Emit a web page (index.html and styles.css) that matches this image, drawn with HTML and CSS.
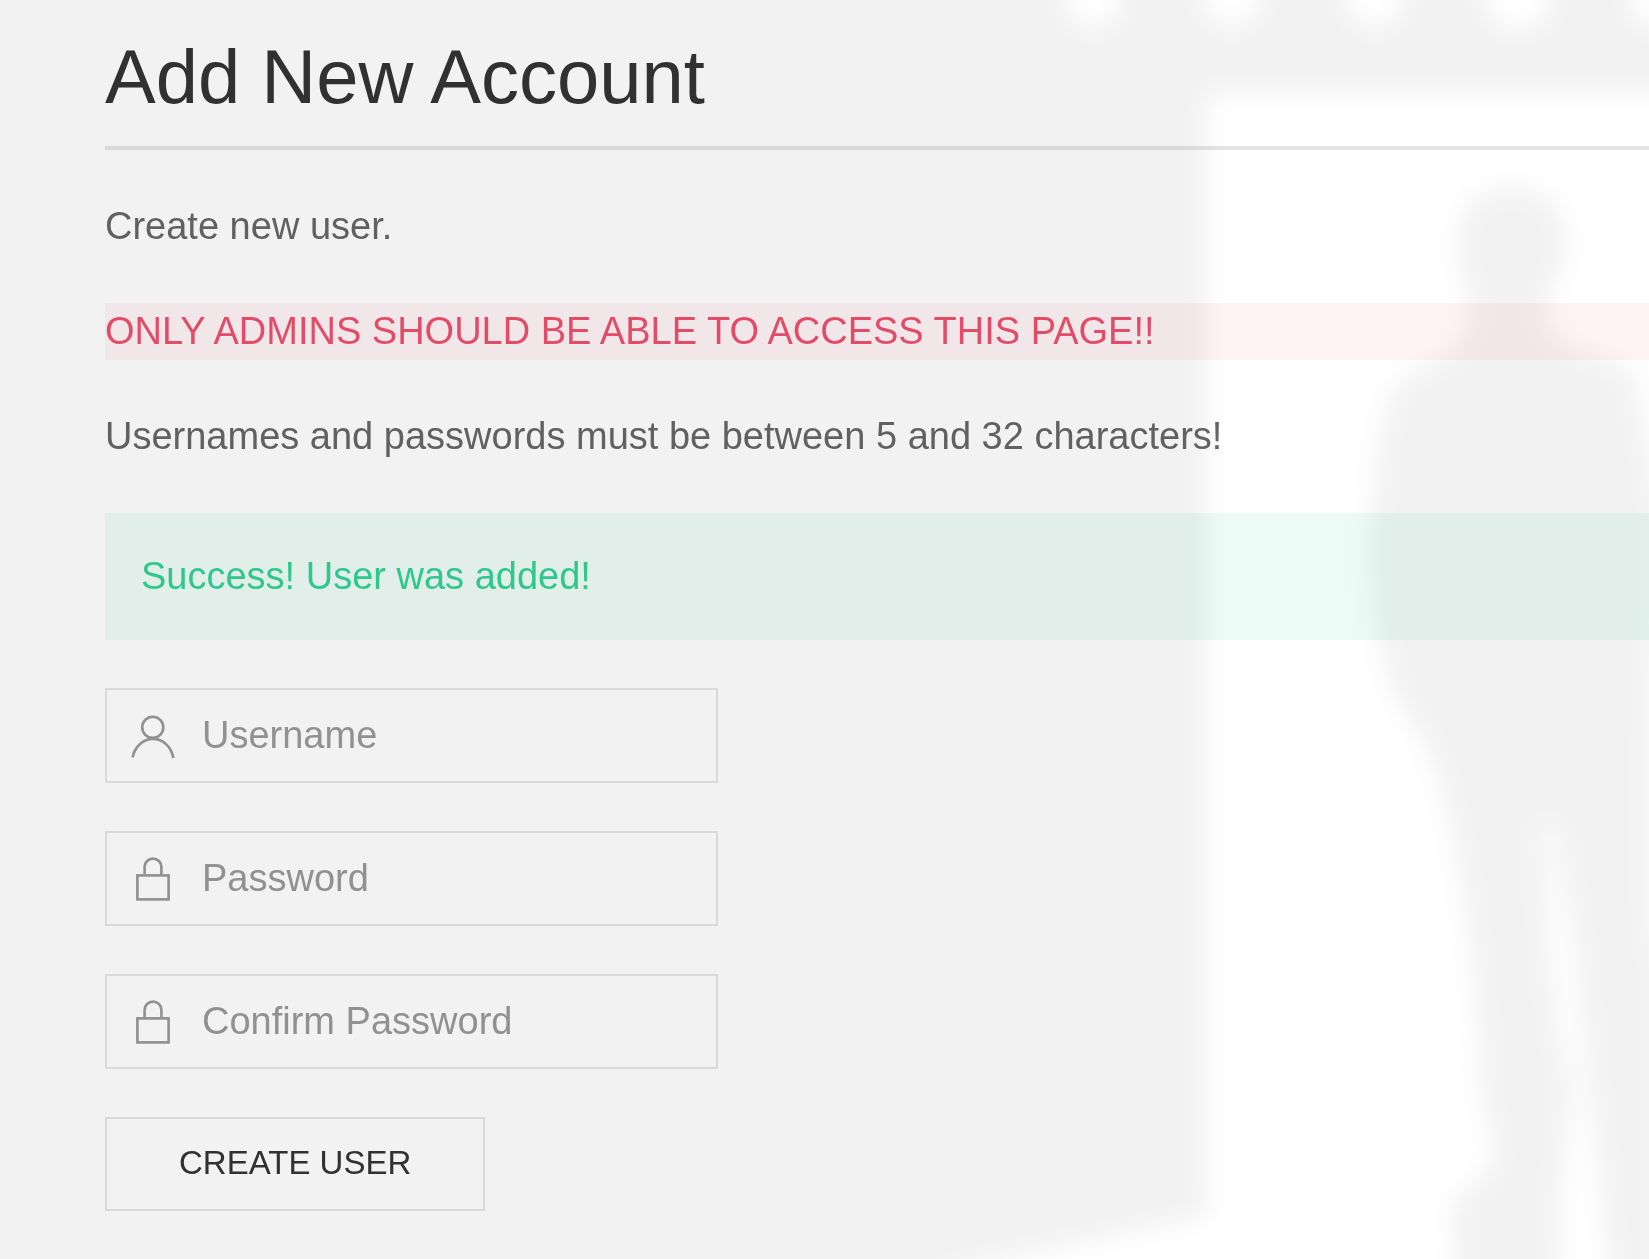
FILE: index.html
```html
<!DOCTYPE html>
<html lang="en">
<head>
  <meta charset="utf-8">
  <meta name="viewport" content="width=device-width, initial-scale=1">
  <title>Add New Account</title>
  <link rel="stylesheet" href="styles.css">
</head>
<body>
  <svg class="backdrop" viewBox="0 0 1649 1259" preserveAspectRatio="xMaxYMin slice" aria-hidden="true">
    <defs>
      <filter id="soft" x="-10%" y="-10%" width="120%" height="120%" color-interpolation-filters="sRGB">
        <feGaussianBlur stdDeviation="13"/>
      </filter>
    </defs>
    <g filter="url(#soft)">
      <g fill="#fff">
        <ellipse cx="1093" cy="-4" rx="28" ry="32"/>
        <ellipse cx="1232" cy="-4" rx="29" ry="32"/>
        <ellipse cx="1375" cy="-4" rx="29" ry="32"/>
        <ellipse cx="1518" cy="-4" rx="34" ry="34"/>
        <ellipse cx="1662" cy="-4" rx="32" ry="34"/>
        <path d="M1207 92H1720V1320H880L950 1270L1207 1217Z"/>
      </g>
      <path fill="#f2f2f2" d="M1512 187C1547 187 1566 208 1566 243C1566 275 1547 283 1547 312C1547 340 1572 350 1600 356C1628 362 1638 376 1641 412C1648 450 1662 490 1662 560C1662 620 1652 680 1652 740L1652 900L1664 1000V1320H1456L1453 1215C1453 1190 1472 1188 1488 1170C1502 1154 1482 1120 1479 1060C1478 990 1465 880 1444 800C1438 770 1424 736 1404 712C1386 680 1371 620 1371 560C1371 500 1378 430 1390 400C1400 370 1430 368 1448 354C1464 342 1472 322 1468 296C1464 280 1458 270 1458 243C1458 208 1477 187 1512 187Z"/>
      <path fill="#fff" d="M1544 826L1554 826L1574 940L1586 1060L1598 1160L1614 1320H1556L1562 1180L1572 1090L1558 1030L1548 930Z"/>
    </g>
  </svg>

  <main class="page">
    <h1 class="title">Add New Account</h1>
    <p>Create new user.</p>
    <p class="warning">ONLY ADMINS SHOULD BE ABLE TO ACCESS THIS PAGE!!</p>
    <p>Usernames and passwords must be between 5 and 32 characters!</p>
    <div class="alert" role="status">Success! User was added!</div>
    <form class="form">
      <label class="field" for="username">
        <svg class="icon" viewBox="0 0 20 20" aria-hidden="true">
          <circle cx="9.9" cy="6.4" r="4.4"/>
          <path d="M1.5 19C2.3 14.5 5.8 11.2 10 11.2C14.2 11.2 17.7 14.6 18.5 19.2"/>
        </svg>
        <input id="username" type="text" placeholder="Username" aria-label="Username">
      </label>
      <label class="field" for="password">
        <svg class="icon" viewBox="0 0 20 20" aria-hidden="true">
          <rect x="3.5" y="8.5" width="13" height="10"/>
          <path d="M6.5 8V4.88C6.5 3.01 8.07 1.5 10 1.5S13.5 3.01 13.5 4.88V8"/>
        </svg>
        <input id="password" type="password" placeholder="Password" aria-label="Password">
      </label>
      <label class="field" for="confirm">
        <svg class="icon" viewBox="0 0 20 20" aria-hidden="true">
          <rect x="3.5" y="8.5" width="13" height="10"/>
          <path d="M6.5 8V4.88C6.5 3.01 8.07 1.5 10 1.5S13.5 3.01 13.5 4.88V8"/>
        </svg>
        <input id="confirm" type="password" placeholder="Confirm Password" aria-label="Confirm Password">
      </label>
      <button class="button" type="submit">CREATE USER</button>
    </form>
  </main>
</body>
</html>
```

FILE: styles.css
```css
* {
  box-sizing: border-box;
}

body {
  margin: 0;
  background: #f2f2f2;
  color: #666;
  font: 38px/57px "Liberation Sans", Arial, sans-serif;
}

/* Decorative scene behind the content */
.backdrop {
  position: fixed;
  inset: 0;
  width: 100%;
  height: 100%;
}

/* Content is tinted by the scene beneath it */
.page {
  position: relative;
  mix-blend-mode: multiply;
  display: flex;
  flex-direction: column;
  gap: 48px;
  padding: 31px 0 48px 105px;
}

.title,
.page p {
  margin: 0;
}

.title {
  padding-bottom: 24px;
  border-bottom: 4px solid #e5e5e5;
  color: #333;
  font-size: 76px;
  font-weight: 400;
  line-height: 91px;
}

.page .warning {
  background: #fef4f6;
  color: #f0506e;
}

.alert {
  padding: 35px 36px;
  background: #edfbf6;
  color: #32d296;
}

.form {
  display: flex;
  flex-direction: column;
  align-items: flex-start;
  gap: 48px;
}

.field {
  display: flex;
  align-items: center;
  gap: 25px;
  width: 100%;
  max-width: 613px;
  height: 95px;
  padding: 0 22px;
  border: 2px solid #e5e5e5;
}

.icon {
  flex: none;
  width: 48px;
  height: 48px;
  fill: none;
  stroke: #999;
  stroke-width: 1.1;
}

.field input {
  flex: 1;
  min-width: 0;
  padding: 0;
  border: 0;
  outline: 0;
  background: transparent;
  color: #666;
  font: inherit;
}

.field input::placeholder {
  color: #999;
  opacity: 1;
}

.button {
  height: 94px;
  padding: 0 72px 4px;
  border: 2px solid #e5e5e5;
  background: transparent;
  color: #333;
  font: inherit;
  font-size: 33px;
  cursor: pointer;
}
```
